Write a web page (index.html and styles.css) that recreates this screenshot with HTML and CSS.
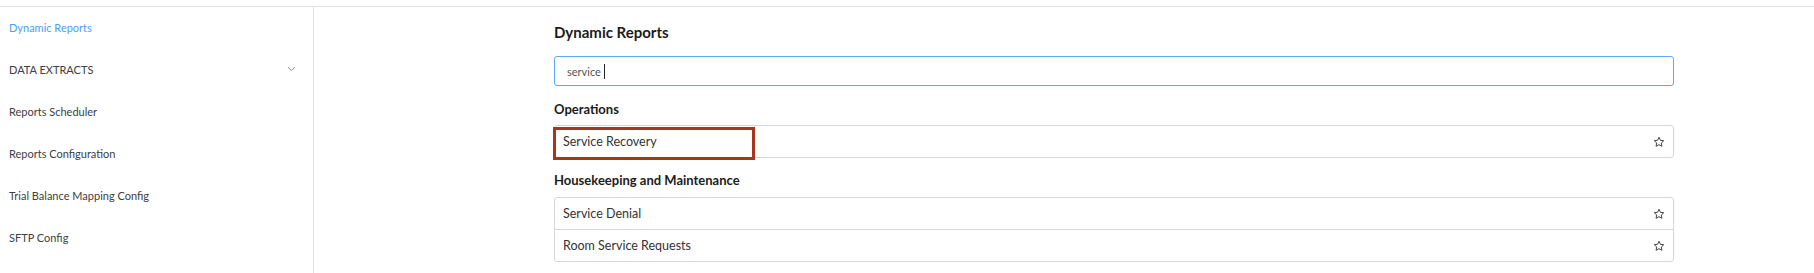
FILE: index.html
```html
<!DOCTYPE html>
<html>
<head>
<meta charset="utf-8">
<link rel="stylesheet" href="styles.css">
</head>
<body>
<div class="topbar"></div>
<div class="layout">
  <nav class="sidebar">
    <div class="nav-item active">Dynamic Reports</div>
    <div class="nav-item group">DATA EXTRACTS
      <svg class="chev" width="9" height="6" viewBox="0 0 9 6"><path d="M1 1.2 L4.5 4.6 L8 1.2" fill="none" stroke="#8a8a8a" stroke-width="1"/></svg>
    </div>
    <div class="nav-item">Reports Scheduler</div>
    <div class="nav-item">Reports Configuration</div>
    <div class="nav-item">Trial Balance Mapping Config</div>
    <div class="nav-item">SFTP Config</div>
  </nav>
  <main class="main">
    <div class="content">
      <h1 class="title">Dynamic Reports</h1>
      <div class="search"><span class="query">service</span><span class="caret"></span></div>
      <h2 class="section">Operations</h2>
      <div class="list">
        <div class="row"><span>Service Recovery</span>
          <svg class="star" width="12" height="12" viewBox="0 0 24 24"><path d="M12 2.5l2.9 6.1 6.6.8-4.9 4.6 1.3 6.6L12 17.3l-5.9 3.3 1.3-6.6-4.9-4.6 6.6-.8z" fill="none" stroke="#444" stroke-width="2" stroke-linejoin="round"/></svg>
        </div>
        <div class="highlight"></div>
      </div>
      <h2 class="section second">Housekeeping and Maintenance</h2>
      <div class="list">
        <div class="row"><span>Service Denial</span>
          <svg class="star" width="12" height="12" viewBox="0 0 24 24"><path d="M12 2.5l2.9 6.1 6.6.8-4.9 4.6 1.3 6.6L12 17.3l-5.9 3.3 1.3-6.6-4.9-4.6 6.6-.8z" fill="none" stroke="#444" stroke-width="2" stroke-linejoin="round"/></svg>
        </div>
        <div class="row"><span>Room Service Requests</span>
          <svg class="star" width="12" height="12" viewBox="0 0 24 24"><path d="M12 2.5l2.9 6.1 6.6.8-4.9 4.6 1.3 6.6L12 17.3l-5.9 3.3 1.3-6.6-4.9-4.6 6.6-.8z" fill="none" stroke="#444" stroke-width="2" stroke-linejoin="round"/></svg>
        </div>
      </div>
    </div>
  </main>
</div>
</body>
</html>
```
FILE: styles.css
```css
* { box-sizing: border-box; }
html, body { margin: 0; padding: 0; background: #fff; }
body { font-family: Lato, "Open Sans", sans-serif; color: #333; }

.topbar { height: 7px; border-bottom: 1px solid #e2e2e2; }

.layout { display: flex; height: 266px; }

.sidebar { width: 314px; border-right: 1px solid #e2e2e2; flex: none; }
.nav-item {
  height: 42px; display: flex; align-items: center;
  padding: 0 17px 0 9px; font-size: 11px; color: #404040;
  justify-content: space-between;
}
.nav-item.active { color: #4a9ff5; }
.nav-item:first-child { margin-top: -1px; }
.chev { display: block; }

.main { flex: 1; }
.content { width: 1120px; margin-left: 240px; padding-top: 15px; }

.title { margin: 0; font-size: 15px; line-height: 20px; font-weight: 700; color: #1b1b1b; }

.search {
  margin-top: 14px; height: 30px; border: 1px solid #5aa9f7; border-radius: 3px;
  display: flex; align-items: center; padding-left: 12px;
}
.query { font-size: 11px; color: #555; }
.caret { display: inline-block; width: 1px; height: 15px; background: #222; margin-left: 3px; }

.section { margin: 14px 0 0; font-size: 13px; line-height: 18px; font-weight: 700; color: #1b1b1b; }
.section.second { margin-top: 13px; }

.list {
  position: relative; margin-top: 7px; border: 1px solid #d6d6d6; border-radius: 3px;
}
.section.second + .list { margin-top: 8px; }
.row {
  height: 31px; display: flex; align-items: center; justify-content: space-between;
  padding: 0 8px 0 8px; font-size: 12.5px; color: #333;
}
.row + .row { border-top: 1px solid #d6d6d6; height: 32px; }
.star { display: block; }

.highlight {
  position: absolute; left: -2px; top: 1px; width: 202px; height: 33px;
  border: 3px solid #a8361d;
}
```
